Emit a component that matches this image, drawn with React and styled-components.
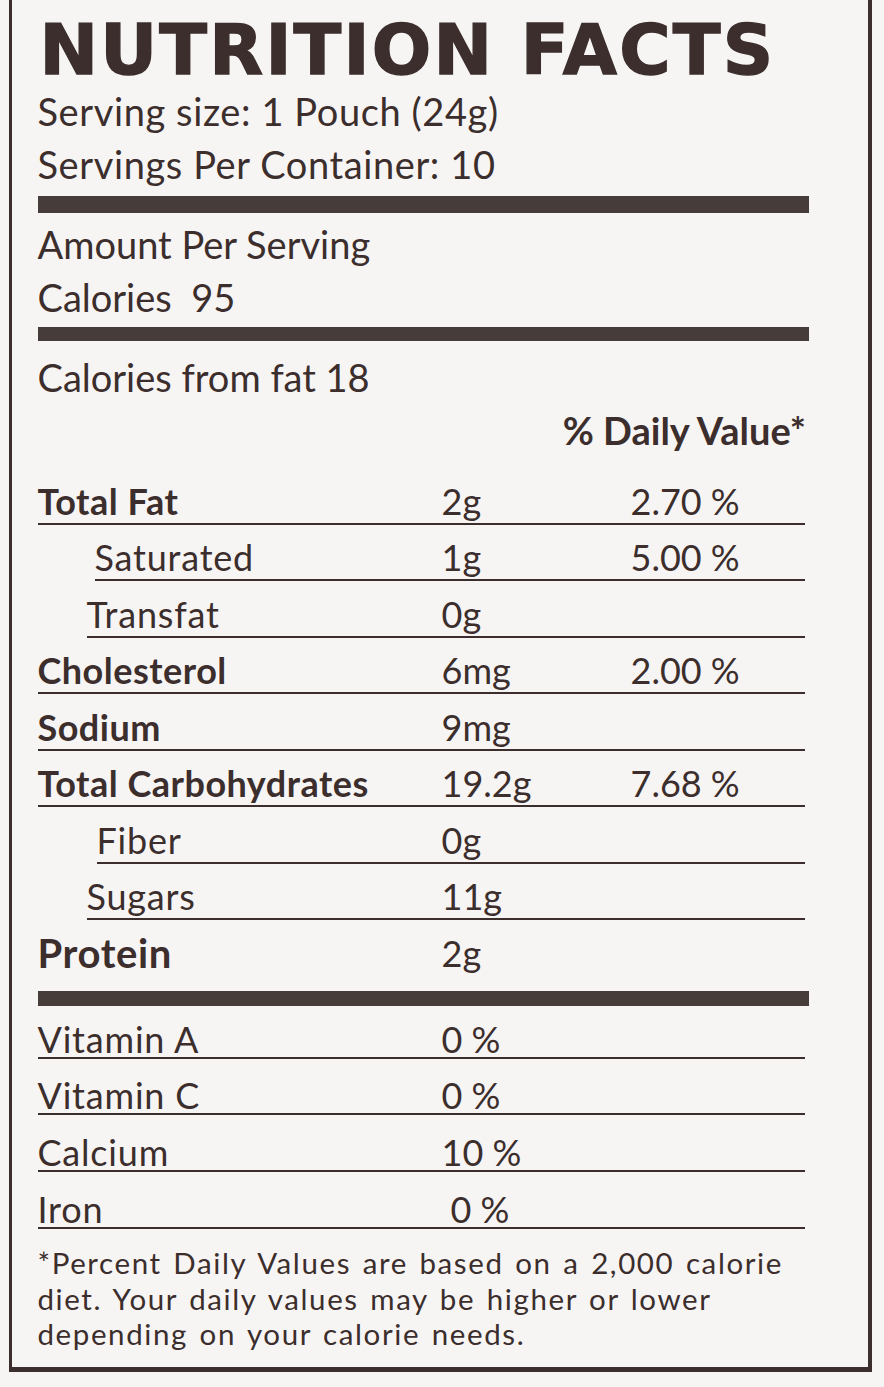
import styled, { createGlobalStyle } from 'styled-components';

const ink = '#3b2e2c';
const barInk = '#463c39';

const GlobalStyle = createGlobalStyle`
  html, body {
    margin: 0;
    padding: 0;
    background: #f7f5f4;
  }
  body {
    font-family: Lato, "Open Sans", sans-serif;
    color: ${ink};
  }
`;

const nutrients = [
  { label: 'Total Fat', bold: true, amount: '2g', dv: '2.70 %' },
  { label: 'Saturated', indent: 57, amount: '1g', dv: '5.00 %' },
  { label: 'Transfat', indent: 49, amount: '0g' },
  { label: 'Cholesterol', bold: true, amount: '6mg', dv: '2.00 %' },
  { label: 'Sodium', bold: true, amount: '9mg' },
  { label: 'Total Carbohydrates', bold: true, amount: '19.2g', dv: '7.68 %' },
  { label: 'Fiber', indent: 59, amount: '0g' },
  { label: 'Sugars', indent: 49, amount: '11g' },
  { label: 'Protein', bold: true, wide: true, amount: '2g', plain: true },
];

const vitamins = [
  { label: 'Vitamin A', value: '0 %' },
  { label: 'Vitamin C', value: '0 %' },
  { label: 'Calcium', value: '10 %' },
  { label: 'Iron', value: '0 %', shift: 9 },
];

const App = () => {
  return (
    <>
      <GlobalStyle />
      <Label>
        <Title>NUTRITION FACTS</Title>
        <Line $spread>Serving size: 1 Pouch (24g)</Line>
        <Line $spread>Servings Per Container: 10</Line>
        <Bar $h={17} $top={5.2} $bottom={4.8} />
        <Line>Amount Per Serving</Line>
        <Line>Calories&nbsp; 95</Line>
        <Bar $h={14} $top={3.2} $bottom={9.8} />
        <Line>Calories from fat 18</Line>
        <DailyHead>% Daily Value*</DailyHead>

        <Nutrients>
          {nutrients.map((n) => (
            <Row key={n.label} $indent={n.indent || 0} $plain={n.plain}>
              <Name $bold={n.bold} $wide={n.wide}>{n.label}</Name>
              <Cell>{n.amount}</Cell>
              <Cell>{n.dv || ''}</Cell>
            </Row>
          ))}
        </Nutrients>

        <Bar $h={15} $top={14.5} $bottom={0} />

        <Vitamins>
          {vitamins.map((v) => (
            <VitaminRow key={v.label}>
              <Name>{v.label}</Name>
              <Cell $shift={v.shift}>{v.value}</Cell>
            </VitaminRow>
          ))}
        </Vitamins>

        <Footnote>
          <span>*Percent Daily Values are based on a 2,000 calorie</span>
          <span>diet. Your daily values may be higher or lower</span>
          <span>depending on your calorie needs.</span>
        </Footnote>
      </Label>
    </>
  );
};

export default App;

const Label = styled.div`
  box-sizing: border-box;
  width: 863px;
  margin-left: 9px;
  padding: 15px 59px 15.4px 25.5px;
  border-left: 3.5px solid ${ink};
  border-right: 4px solid ${ink};
  border-bottom: 5px solid ${ink};
`;

const Title = styled.h1`
  margin: 0;
  padding-left: 2px;
  font-family: "DejaVu Sans", "Liberation Sans", sans-serif;
  font-weight: 700;
  font-size: 70px;
  line-height: 70px;
  letter-spacing: 2.2px;
  color: ${ink};
  -webkit-text-stroke: 1.4px ${ink};
  white-space: nowrap;
`;

const Line = styled.div`
  font-size: 38px;
  line-height: 53px;
  letter-spacing: ${({ $spread }) => ($spread ? 0.6 : 0)}px;
  white-space: nowrap;
`;

const DailyHead = styled(Line)`
  text-align: right;
  font-weight: 700;
  margin-right: 3px;
`;

const Bar = styled.div`
  height: ${({ $h }) => $h}px;
  margin-top: ${({ $top }) => $top}px;
  margin-bottom: ${({ $bottom }) => $bottom}px;
  background: ${barInk};
`;

const Nutrients = styled.div`
  margin-top: 11.2px;
`;

const Row = styled.div`
  display: grid;
  grid-template-columns: ${({ $indent }) => 404 - $indent}px 189px 1fr;
  align-items: end;
  box-sizing: border-box;
  height: 56.5px;
  margin: 0 4px 0 ${({ $indent }) => $indent}px;
  padding-bottom: 4px;
  border-bottom: 2.5px solid ${({ $plain }) => ($plain ? 'transparent' : ink)};
`;

const Cell = styled.span`
  font-size: 36px;
  line-height: 36px;
  white-space: nowrap;
  padding-left: ${({ $shift }) => $shift || 0}px;
`;

const Name = styled.span`
  font-size: ${({ $wide }) => ($wide ? 40 : 36)}px;
  line-height: 36px;
  font-weight: ${({ $bold }) => ($bold ? 700 : 400)};
  letter-spacing: ${({ $bold, $wide }) => ($wide ? 0.6 : $bold ? 0.5 : 0.8)}px;
  white-space: nowrap;
`;

const Vitamins = styled.div``;

const VitaminRow = styled.div`
  display: grid;
  grid-template-columns: 404px 1fr;
  align-items: end;
  box-sizing: border-box;
  height: 56.7px;
  margin-right: 4px;
  border-bottom: 2.5px solid ${ink};

  &:first-child {
    height: 52.5px;
  }
`;

const Footnote = styled.p`
  display: flex;
  flex-direction: column;
  margin: 16.5px 0 0;
  font-size: 29.5px;
  line-height: 35.5px;
  letter-spacing: 1.6px;
  word-spacing: 2.5px;
  white-space: nowrap;
`;
